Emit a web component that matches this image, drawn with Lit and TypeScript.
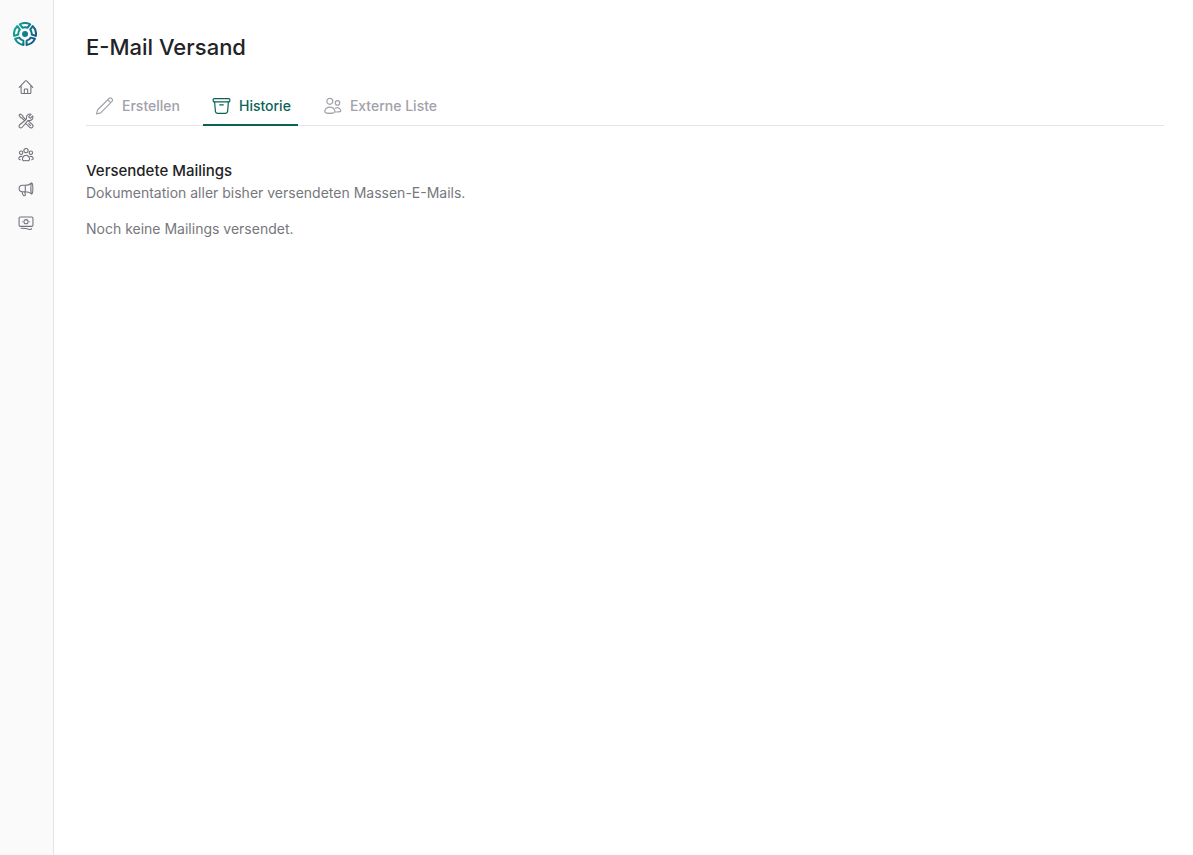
import { LitElement, html, css, svg } from "lit";
import { customElement, state } from "lit/decorators.js";

const navItems = [
  {
    label: "Start",
    icon: svg`<path d="M1.400 9.400 8.300 2.200q.7-.6 1.400 0l6.900 7.200M3.500 7.500v7.700q0 1.100 1.100 1.100h8.800q1.100 0 1.100-1.100V7.500M7.100 16.100v-4q0-.9.900-.9h2q.9 0 .9.900v4"/>`,
  },
  {
    label: "Werkzeuge",
    icon: svg`<path transform="translate(-.6 -.6) scale(.8)" stroke-width="1.500" d="M11.420 15.170 17.250 21A2.652 2.652 0 0 0 21 17.250l-5.877-5.877M11.420 15.170l2.496-3.030c.317-.384.740-.626 1.208-.766M11.420 15.170l-4.655 5.653a2.548 2.548 0 1 1-3.586-3.586l6.837-5.630m5.108-.233c.550-.164 1.163-.188 1.743-.140a4.500 4.500 0 0 0 4.486-6.336l-3.276 3.277a3.004 3.004 0 0 1-2.250-2.250l3.276-3.276a4.500 4.500 0 0 0-6.336 4.486c.091 1.076-.071 2.264-.904 2.950l-.102.085m-1.745 1.437L5.909 7.500H4.500L2.250 3.750l1.500-1.500L7.500 4.500v1.409l4.260 4.260m-1.745 1.437 1.745-1.437m6.615 8.206L15.750 15.750"/>`,
  },
  {
    label: "Mitglieder",
    icon: svg`<circle cx="9" cy="4" r="2.400"/><circle cx="3.500" cy="6.500" r="1.900"/><circle cx="14.500" cy="6.500" r="1.900"/><path d="M5.100 12.600C5.800 10.300 7.200 9.200 9 9.200s3.200 1.100 3.900 3.400c.5 1.700-.5 3-2.100 2.800q-1.800-.3-3.600 0c-1.600.2-2.600-1.100-2.100-2.800ZM4.500 10.700c-1.600-.4-2.900.2-3.500 1.600-.4 1.200.2 2.100 1.700 2M13.500 10.700c1.600-.4 2.900.2 3.500 1.600.4 1.200-.2 2.100-1.700 2"/>`,
  },
  {
    label: "Mailings",
    icon: svg`<path d="M14.900 2.500c-2 1.700-4 2.300-6.700 2.300H4.900a3.600 3.600 0 0 0 0 7.200h3.300c2.700 0 4.700.6 6.700 2.300M8.200 4.800V12M4.500 12.100l1.100 3.600q.2.800 1 .8h.9q1 0 .8-1l-.8-3.400M14.900 2.500q.2-.5.7-.3c.7.400 1.100 2.900 1.100 6.200s-.4 5.800-1.100 6.200q-.5.200-.7-.3M14.900 2.500q-1 5.900 0 11.800"/>`,
  },
  {
    label: "Finanzen",
    icon: svg`<rect x="1.200" y="2.200" width="15.600" height="10.600" rx="1.300"/><circle cx="9" cy="7.500" r="2.300"/><path d="M4.800 7.500v.1M13.200 7.500v.1M3.500 15q5.200.1 9.900 1.200 1.500.3 1.900-.9"/>`,
  },
];

const tabs = [
  {
    id: "erstellen",
    label: "Erstellen",
    icon: svg`<path d="M1 17 2.200 12.800 13.600 1.500q1.400-1.100 2.700.2t.2 2.700L5.200 15.800ZM12.300 2.800l2.900 2.900"/>`,
  },
  {
    id: "historie",
    label: "Historie",
    icon: svg`<rect x=".7" y="1.700" width="16.600" height="3.200" rx=".9"/><path d="M2.100 5 2.900 14.400q.2 1.900 2.100 1.900h8q1.900 0 2.100-1.900l.8-9.400M7.200 7.800h3.600"/>`,
  },
  {
    id: "extern",
    label: "Externe Liste",
    icon: svg`<circle cx="6.300" cy="4.300" r="3"/><circle cx="14" cy="5.900" r="2.200"/><path d="M1.300 13.700c.8-2.400 2.600-3.600 5-3.600s4.200 1.200 5 3.600c.3 1-.2 1.800-1.200 2.100q-3.800 1-7.600 0c-1-.3-1.500-1.100-1.200-2.100ZM11.900 11.200c2.300-1 4.300-.1 5.200 1.800.4.900 0 1.500-.8 1.700q-2.200.5-4.700.2"/>`,
  },
];

// One fifth of the logo ring, centred on the given angle.
function ringSegment(angle: number): string {
  const point = (radius: number, degrees: number) => {
    const rad = ((degrees - 90) * Math.PI) / 180;
    return `${(12 + radius * Math.cos(rad)).toFixed(2)} ${(12 + radius * Math.sin(rad)).toFixed(2)}`;
  };
  return (
    `M${point(11, angle - 28)}A11 11 0 0 1 ${point(11, angle + 28)}` +
    `L${point(6.8, angle + 22)}A6.8 6.8 0 0 0 ${point(6.8, angle - 22)}Z`
  );
}

const logoRing = [0, 72, 144, 216, 288].map(ringSegment).join("");

@customElement("app-root")
export class AppRoot extends LitElement {
  static styles = css`
    :host {
      display: flex;
      min-height: 100vh;
      background: #fff;
      color: #232326;
      font-family: Inter, "Liberation Sans", sans-serif;
      font-size: 14px;
      line-height: 20px;
    }
    .sidebar {
      box-sizing: border-box;
      flex: 0 0 54px;
      display: flex;
      flex-direction: column;
      align-items: center;
      padding: 22px 3px 0 0;
      background: #fafafa;
      border-right: 1px solid #e4e4e7;
    }
    .logo {
      display: block;
      width: 24px;
      height: 24px;
    }
    .nav {
      display: flex;
      flex-direction: column;
      gap: 18px;
      padding: 33px 0 0 2px;
    }
    .nav a {
      display: block;
      height: 16px;
      color: #71717a;
    }
    .nav svg {
      display: block;
      width: 16px;
      height: 16px;
    }
    .line {
      fill: none;
      stroke: currentColor;
      stroke-width: 1.2;
      stroke-linecap: round;
      stroke-linejoin: round;
    }
    main {
      flex: 1;
      min-width: 0;
      padding: 31px 29px 32px 32px;
    }
    h1,
    h2,
    p {
      margin: 0;
    }
    h1 {
      font-size: 22px;
      line-height: 32px;
      font-weight: 500;
    }
    .tabs {
      display: flex;
      gap: 16px;
      margin-top: 24px;
      border-bottom: 1px solid #e4e4e7;
    }
    .tab {
      display: flex;
      align-items: center;
      gap: 8px;
      margin-bottom: -1px;
      padding: 9px 7px 8px 9px;
      border: 0;
      border-bottom: 2px solid transparent;
      background: none;
      color: #a1a1aa;
      font: inherit;
      font-weight: 500;
      cursor: pointer;
    }
    .tab[aria-selected="true"] {
      border-color: #0b6356;
      color: #0b6356;
    }
    .tab svg {
      width: 19px;
      height: 18px;
    }
    h2 {
      margin-top: 34px;
      font-size: 15px;
      line-height: 22px;
      font-weight: 500;
    }
    p {
      color: #77777d;
      line-height: 22px;
    }
    .empty {
      margin-top: 14px;
    }
  `;

  @state() private active = "historie";

  render() {
    return html`
      <aside class="sidebar">
        <svg class="logo" viewBox="0 0 24 24" role="img" aria-label="Logo">
          <defs>
            <linearGradient id="g" gradientUnits="userSpaceOnUse" x1="2" y1="7" x2="22" y2="17">
              <stop offset="0" stop-color="#0fa58b" />
              <stop offset="1" stop-color="#14568c" />
            </linearGradient>
          </defs>
          <circle cx="12" cy="12" r="3" fill="url(#g)" />
          <path d=${logoRing} fill="none" stroke="url(#g)" stroke-width="2" stroke-linejoin="round" />
        </svg>
        <nav class="nav" aria-label="Hauptmenü">
          ${navItems.map(
            (item) => html`<a href="#" aria-label=${item.label}>
              <svg class="line" viewBox="0 0 18 18" aria-hidden="true">${item.icon}</svg>
            </a>`,
          )}
        </nav>
      </aside>
      <main>
        <h1>E-Mail Versand</h1>
        <div class="tabs" role="tablist">
          ${tabs.map(
            (tab) => html`<button
              class="tab"
              role="tab"
              aria-selected=${this.active === tab.id ? "true" : "false"}
              @click=${() => (this.active = tab.id)}
            >
              <svg class="line" viewBox="0 0 18 18" aria-hidden="true">${tab.icon}</svg>
              ${tab.label}
            </button>`,
          )}
        </div>
        <section>
          <h2>Versendete Mailings</h2>
          <p>Dokumentation aller bisher versendeten Massen-E-Mails.</p>
          <p class="empty">Noch keine Mailings versendet.</p>
        </section>
      </main>
    `;
  }
}
